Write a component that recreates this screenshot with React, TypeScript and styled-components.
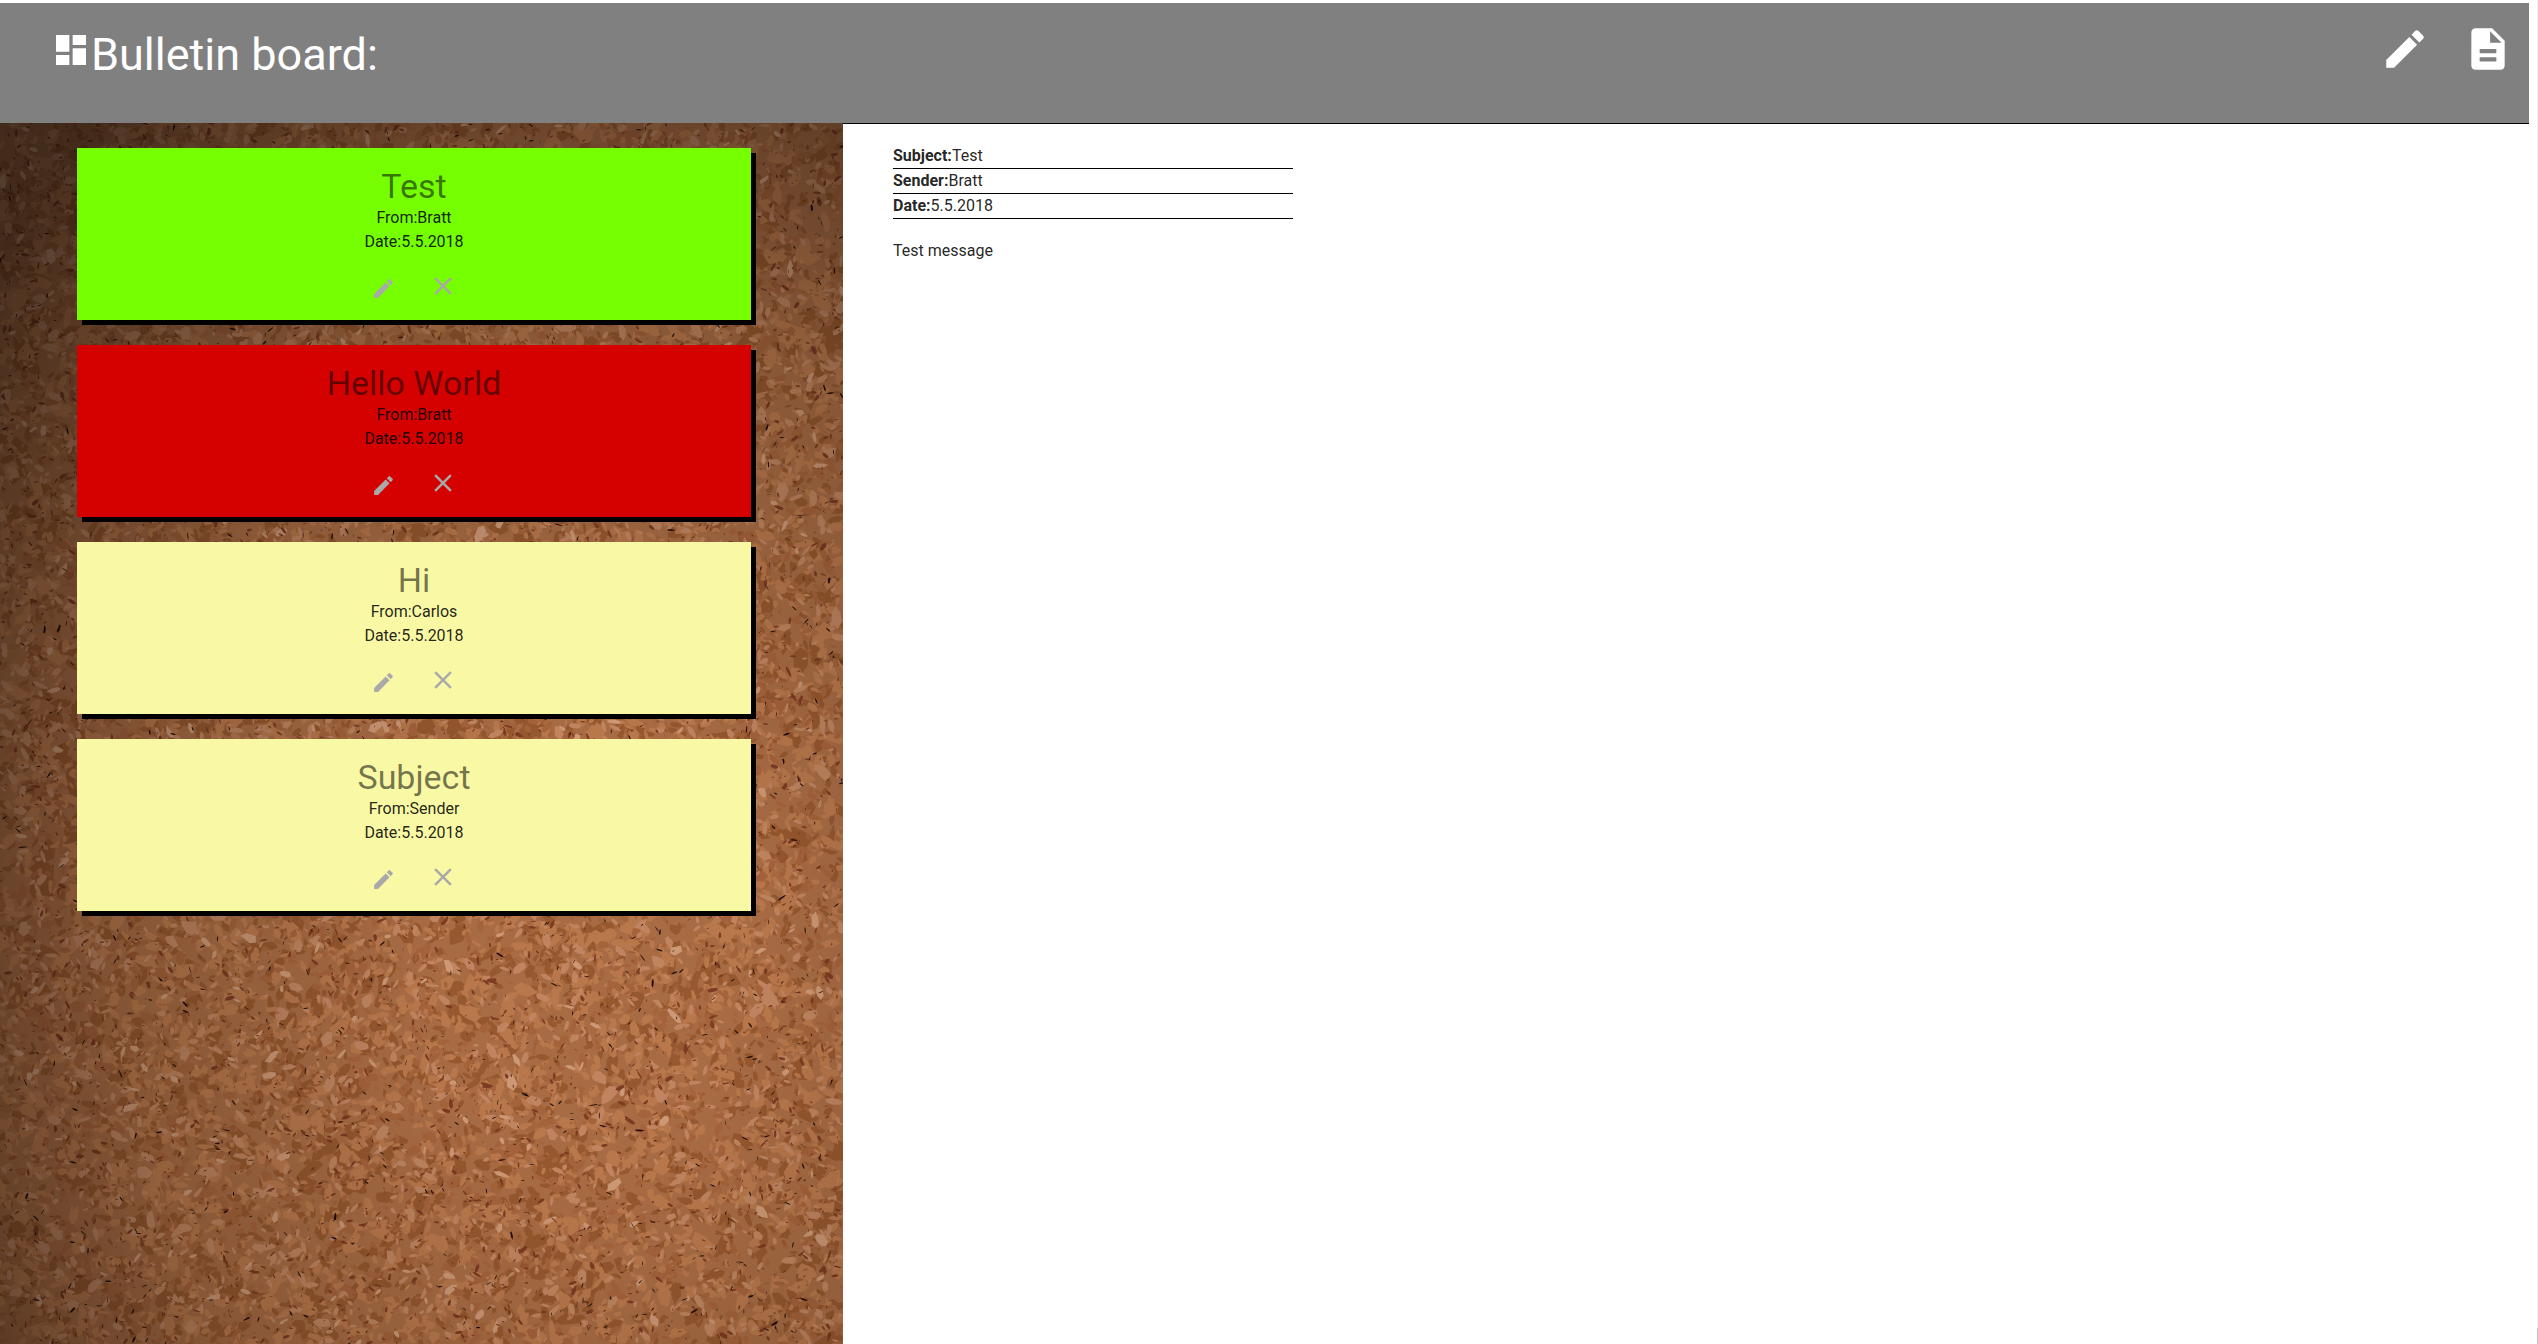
import React from "react";
import styled, { createGlobalStyle } from "styled-components";

type NoteColor = "green" | "red" | "yellow";

const noteBackgrounds: Record<NoteColor, string> = {
  green: "#76ff00",
  red: "#d50000",
  yellow: "#f9f9a5",
};

const notes: { subject: string; sender: string; date: string; color: NoteColor }[] = [
  { subject: "Test", sender: "Bratt", date: "5.5.2018", color: "green" },
  { subject: "Hello World", sender: "Bratt", date: "5.5.2018", color: "red" },
  { subject: "Hi", sender: "Carlos", date: "5.5.2018", color: "yellow" },
  { subject: "Subject", sender: "Sender", date: "5.5.2018", color: "yellow" },
];

const GlobalStyle = createGlobalStyle`
  html, body {
    margin: 0;
    height: 100%;
    background: #fff;
    overflow: hidden;
  }
  body {
    font-family: Roboto, "Liberation Sans", sans-serif;
    color: rgba(0, 0, 0, 0.87);
  }
`;

const Shell = styled.div`
  display: flex;
  height: 1344px;
`;

const Page = styled.div`
  display: flex;
  flex-direction: column;
  flex: 1;
  min-width: 0;
  padding: 3px 8px 0 0;
`;

const ScrollRail = styled.div`
  width: 1px;
  flex: none;
  background: linear-gradient(#f1f1f1 1328px, #c1c1c1 1328px);
`;

const Header = styled.header`
  display: flex;
  align-items: flex-start;
  justify-content: space-between;
  height: 120px;
  flex: none;
  background: #808080;
  color: #fff;
`;

const Brand = styled.div`
  display: flex;
  align-items: flex-start;
  padding: 27px 0 0 51px;
`;

const BrandTitle = styled.h1`
  margin: -1px 0 0;
  font-size: 45px;
  line-height: 52px;
  font-weight: 400;
`;

const HeaderActions = styled.div`
  display: flex;
  gap: 33px;
  padding: 21px 16px 0 0;
`;

const Icon = styled.svg<{ $size: number; $color?: string }>`
  display: block;
  flex: none;
  width: ${(p) => p.$size}px;
  height: ${(p) => p.$size}px;
  fill: ${(p) => p.$color ?? "currentColor"};
`;

const Main = styled.main`
  display: flex;
  flex: 1;
  min-height: 0;
`;

const Board = styled.aside`
  position: relative;
  width: 843px;
  flex: none;
  display: flex;
  flex-direction: column;
  gap: 25px;
  padding: 25px 0 0 77px;
  box-sizing: border-box;
  overflow: hidden;
  background: #a86c44;
`;

const CorkLayer = styled.svg`
  position: absolute;
  inset: 0;
  width: 100%;
  height: 100%;
`;

const Note = styled.article<{ $color: NoteColor }>`
  position: relative;
  display: flex;
  flex-direction: column;
  align-items: center;
  width: 674px;
  height: 172px;
  box-shadow: 5px 5px 0 #000;
  background: ${(p) => noteBackgrounds[p.$color]};
`;

const NoteTitle = styled.h2`
  margin: 19px 0 0;
  font-size: 34px;
  line-height: 39px;
  font-weight: 400;
  color: rgba(0, 0, 0, 0.54);
`;

const NoteLine = styled.div`
  font-size: 16px;
  line-height: 24px;
`;

const NoteActions = styled.div`
  display: flex;
  align-items: flex-start;
  gap: 32px;
  margin-top: 17px;
`;

const PencilSlot = styled.div`
  padding-top: 5px;
`;

const Detail = styled.section`
  flex: 1;
  border-top: 1px solid #000;
  padding: 20px 0 0 50px;
  font-size: 16px;
`;

const DetailRow = styled.div`
  width: 400px;
  height: 24px;
  line-height: 24px;
  border-bottom: 1px solid #000;
`;

const DetailLabel = styled.b`
  font-weight: 700;
`;

const Message = styled.p`
  margin: 20px 0 0;
  line-height: 24px;
`;

const paths = {
  dashboard: "M3 13h8V3H3v10zm0 8h8v-6H3v6zm10 0h8V11h-8v10zm0-18v6h8V3h-8z",
  edit: "M3 17.25V21h3.75L17.81 9.94l-3.75-3.75L3 17.25zM20.71 7.04c.39-.39.39-1.02 0-1.41l-2.34-2.34c-.39-.39-1.02-.39-1.41 0l-1.83 1.83 3.75 3.75 1.83-1.83z",
  description:
    "M14 2H6c-1.1 0-1.99.9-1.99 2L4 20c0 1.1.89 2 1.99 2H18c1.1 0 2-.9 2-2V8l-6-6zm2 16H8v-2h8v2zm0-4H8v-2h8v2zm-3-5V3.5L18.5 9H13z",
  clear:
    "M19 6.41L17.59 5 12 10.59 6.41 5 5 6.41 10.59 12 5 17.59 6.41 19 12 13.41 17.59 19 19 17.59 13.41 12z",
};

function MaterialIcon(props: { name: keyof typeof paths; size: number; color?: string }) {
  return (
    <Icon viewBox="0 0 24 24" $size={props.size} $color={props.color}>
      <path d={paths[props.name]} />
    </Icon>
  );
}

const CORK_W = 843;
const CORK_H = 1221;

// small seeded generator so the board looks the same on every load
function seeded(seed: number) {
  let s = seed;
  return () => {
    s = (s + 0x6d2b79f5) | 0;
    let t = Math.imul(s ^ (s >>> 15), 1 | s);
    t = (t + Math.imul(t ^ (t >>> 7), 61 | t)) ^ t;
    return ((t ^ (t >>> 14)) >>> 0) / 4294967296;
  };
}

function flakes(seed: number, count: number, minLen: number, maxLen: number, ratio: number) {
  const rnd = seeded(seed);
  const parts: string[] = [];
  for (let i = 0; i < count; i++) {
    const x = rnd() * CORK_W;
    const y = rnd() * CORK_H;
    const a = minLen + (maxLen - minLen) * rnd() * rnd();
    const b = a * ratio * (0.6 + rnd() * 0.8);
    const angle = rnd() * Math.PI;
    const corners = 5 + Math.floor(rnd() * 3);
    let d = "";
    for (let c = 0; c < corners; c++) {
      const t = (c / corners) * Math.PI * 2;
      const jitter = 0.7 + rnd() * 0.5;
      const px = Math.cos(t) * a * jitter;
      const py = Math.sin(t) * b * jitter;
      const vx = x + px * Math.cos(angle) - py * Math.sin(angle);
      const vy = y + px * Math.sin(angle) + py * Math.cos(angle);
      d += `${c === 0 ? "M" : "L"}${vx.toFixed(1)} ${vy.toFixed(1)}`;
    }
    parts.push(d + "z");
  }
  return parts.join("");
}

const corkLayers = [
  { fill: "#96582f", d: flakes(1, 5200, 4, 16, 0.5) },
  { fill: "#b9784c", d: flakes(2, 6200, 4, 14, 0.5) },
  { fill: "#a5643b", d: flakes(3, 4200, 3, 11, 0.5) },
  { fill: "#c08560", d: flakes(4, 3000, 3, 11, 0.45) },
  { fill: "#cc9874", d: flakes(5, 350, 4, 11, 0.45) },
  { fill: "#7b3a20", d: flakes(6, 3400, 1.5, 6, 0.35) },
  { fill: "#20100c", d: flakes(7, 2400, 1, 5, 0.2) },
];

// cork board texture, the original is a photo
function Cork() {
  return (
    <CorkLayer viewBox={`0 0 ${CORK_W} ${CORK_H}`} aria-hidden="true">
      <defs>
        <filter id="cork-soft" x="0" y="0" width="100%" height="100%">
          <feGaussianBlur stdDeviation="0.45" />
        </filter>
        <radialGradient id="cork-shade" cx="0.7" cy="0.68" r="0.9">
          <stop offset="0.2" stopColor="#000" stopOpacity="0" />
          <stop offset="0.6" stopColor="#000" stopOpacity="0.2" />
          <stop offset="1" stopColor="#000" stopOpacity="0.6" />
        </radialGradient>
      </defs>
      <g filter="url(#cork-soft)">
        {corkLayers.map((layer) => (
          <path key={layer.fill} d={layer.d} fill={layer.fill} />
        ))}
      </g>
      <rect width={CORK_W} height={CORK_H} fill="url(#cork-shade)" />
    </CorkLayer>
  );
}

export default function App() {
  return (
    <>
      <GlobalStyle />
      <Shell>
        <Page>
          <Header>
            <Brand>
              <MaterialIcon name="dashboard" size={40} />
              <BrandTitle>Bulletin board:</BrandTitle>
            </Brand>
            <HeaderActions>
              <MaterialIcon name="edit" size={50} />
              <MaterialIcon name="description" size={50} />
            </HeaderActions>
          </Header>
          <Main>
            <Board>
              <Cork />
              {notes.map((note) => (
                <Note key={note.subject} $color={note.color}>
                  <NoteTitle>{note.subject}</NoteTitle>
                  <NoteLine>From:{note.sender}</NoteLine>
                  <NoteLine>Date:{note.date}</NoteLine>
                  <NoteActions>
                    <PencilSlot>
                      <MaterialIcon name="edit" size={25} color="#a9a9a9" />
                    </PencilSlot>
                    <MaterialIcon name="clear" size={30} color="#a9a9a9" />
                  </NoteActions>
                </Note>
              ))}
            </Board>
            <Detail>
              <DetailRow>
                <DetailLabel>Subject:</DetailLabel>Test
              </DetailRow>
              <DetailRow>
                <DetailLabel>Sender:</DetailLabel>Bratt
              </DetailRow>
              <DetailRow>
                <DetailLabel>Date:</DetailLabel>5.5.2018
              </DetailRow>
              <Message>Test message</Message>
            </Detail>
          </Main>
        </Page>
        <ScrollRail />
      </Shell>
    </>
  );
}
